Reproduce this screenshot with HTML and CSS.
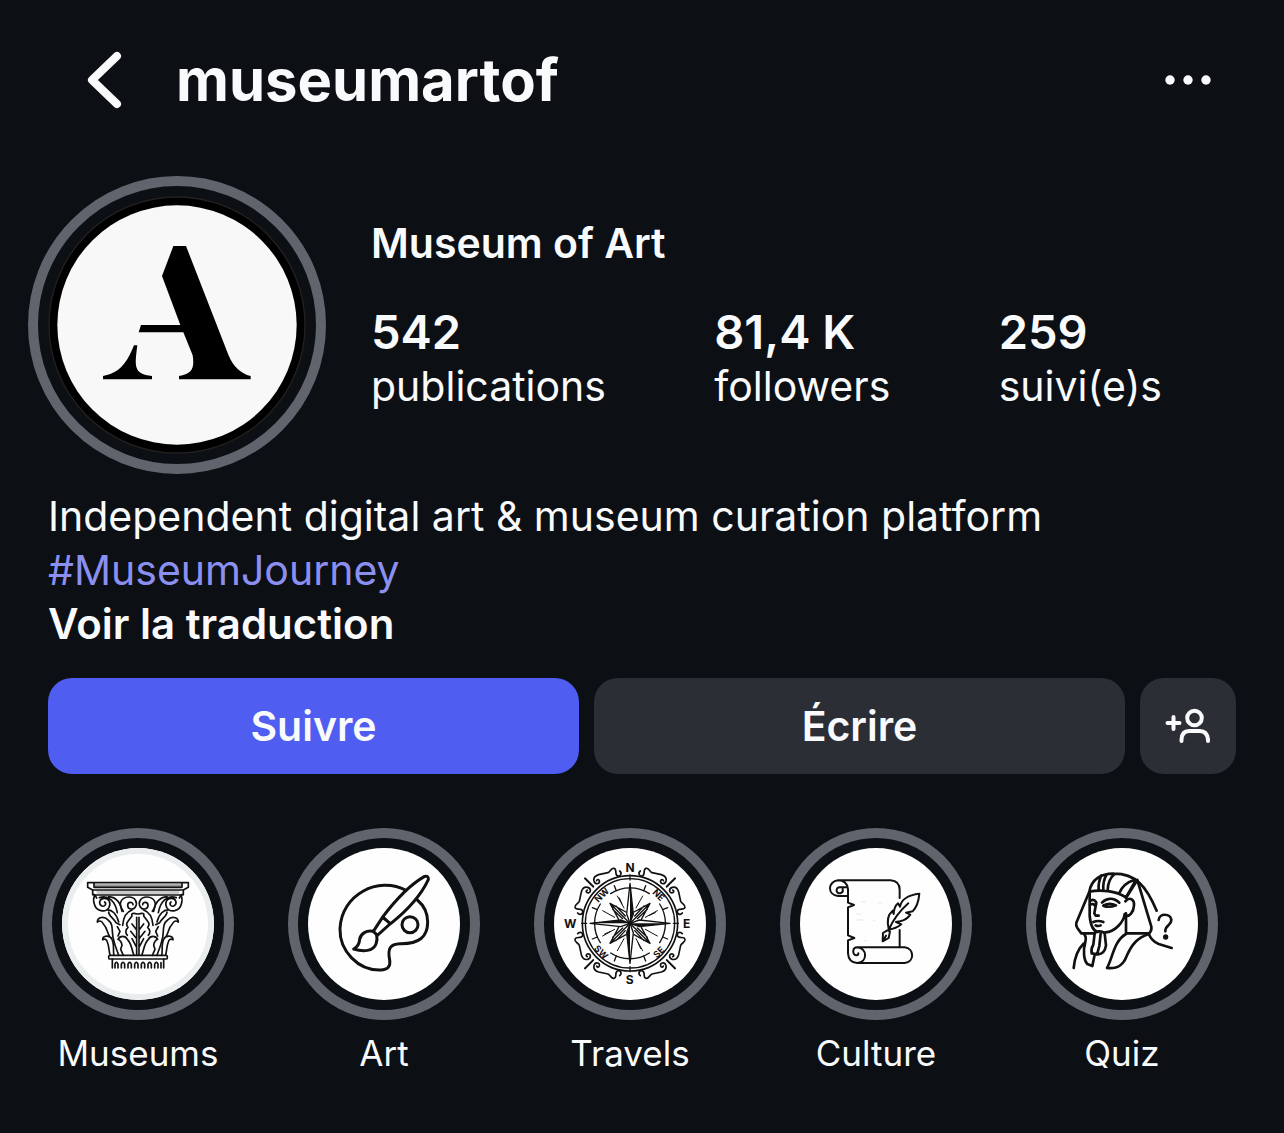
FILE: index.html
```html
<!DOCTYPE html>
<html lang="fr">
<head>
<meta charset="utf-8">
<meta name="viewport" content="width=device-width, initial-scale=1">
<title>museumartof</title>
<link rel="stylesheet" href="styles.css">
</head>
<body>
<header class="topbar">
  <button class="icon-button" type="button" aria-label="Retour">
    <svg class="back-icon" viewBox="0 0 36 58" aria-hidden="true"><path d="M31 5 6 29 31 53"/></svg>
  </button>
  <h1 class="username">museumartof</h1>
  <button class="icon-button" type="button" aria-label="Options">
    <svg class="more-icon" viewBox="0 0 46 10" aria-hidden="true"><circle cx="5" cy="5" r="4.7"/><circle cx="23" cy="5" r="4.7"/><circle cx="41" cy="5" r="4.7"/></svg>
  </button>
</header>

<main>
  <section class="profile">
    <a class="avatar" href="#story" aria-label="Story de museumartof">
      <svg viewBox="84 78 774 774" aria-hidden="true">
        <circle cx="471" cy="465" r="384" fill="#000" stroke="#24211f" stroke-width="4"/>
        <circle cx="471" cy="465" r="359" fill="#f8f8f8"/>
        <path d="M460 228H498L625 554Q646 606 692 618V628H477V618C516 612 524 594 518 556L490 487H356L363 465H481L426 318Z"/>
        <path d="M342 526H352C344 590 340 612 396 618V628H249V618C300 610 322 576 342 526Z"/>
      </svg>
    </a>
    <div class="summary">
      <h2 class="name">Museum of Art</h2>
      <ul class="stats">
        <li><a href="#publications"><strong>542</strong><span>publications</span></a></li>
        <li><a href="#followers"><strong>81,4 K</strong><span>followers</span></a></li>
        <li><a href="#suivis"><strong>259</strong><span>suivi(e)s</span></a></li>
      </ul>
    </div>
  </section>

  <section class="bio">
    <p>Independent digital art &amp; museum curation platform</p>
    <p><a class="hashtag" href="#MuseumJourney">#MuseumJourney</a></p>
    <button class="translate" type="button">Voir la traduction</button>
  </section>

  <div class="actions">
    <button class="action primary" type="button">Suivre</button>
    <button class="action" type="button">Écrire</button>
    <button class="action square" type="button" aria-label="Suggestions">
      <svg viewBox="0 0 46 36" aria-hidden="true"><circle cx="29.500" cy="10" r="7.300"/><path d="M16.500 33V31.500Q17 23 24 23H35Q42 23 43 31.500V33M2.500 15H14.500M8.500 9V21"/></svg>
    </button>
  </div>

  <nav class="highlights" aria-label="Stories à la une">
    <a class="highlight" href="#museums">
      <span class="ring">
        <svg class="art" viewBox="66 72 456 456" aria-hidden="true">
          <circle cx="294" cy="300" r="219" fill="none" stroke="#eaedee" stroke-width="18"/>
          <g stroke-width="5">
            <path d="M162 181H426V192H166Z" fill="#999" stroke="none"/>
            <path d="M168 200H418V211H172Z" fill="#ccc" stroke="none"/>
            <path d="M143 176H445V190L430 198V212H424L418 222M143 176V190L158 198V212H164L170 222M162 176V190H426V176M160 198H428M160 213H428"/>
            <rect x="206" y="394" width="176" height="11" rx="4"/>
            <path d="M217 405V432M371 405V432M225 432V420Q229 410 234 420V432M244 432V420Q249 410 254 420V432M264 432V420Q269 410 274 420V432M284 432V420Q289 410 294 420V432M304 432V420Q309 410 314 420V432M324 432V420Q329 410 334 420V432M344 432V420Q349 410 354 420V432M363 432V416"/>
          </g>
          <g id="acanthus" stroke-width="5">
            <path d="M164 214Q158 226 163 240C168 262 196 268 207 250C214 236 206 222 192 223C178 224 174 240 186 246C194 249 201 240 194 234M178 221C206 212 226 232 232 266M206 218C228 220 242 236 246 262M200 258C216 256 230 270 236 294"/>
            <path d="M250 262C232 240 244 220 265 219C286 218 294 236 286 249C279 260 263 256 263 244C263 233 279 232 279 242M276 258C258 264 250 278 248 304"/>
            <path d="M172 294C172 278 194 276 204 288C224 302 212 326 222 352C226 370 232 380 236 394M172 294Q184 286 190 300C202 312 200 322 208 336M206 264C206 276 220 282 228 296L240 302"/>
            <path d="M188 347C188 334 210 332 216 346C224 362 218 378 222 394M188 347Q200 342 202 354C208 368 206 380 210 392M234 346C240 334 256 334 262 346C276 360 274 376 282 394M234 346Q244 350 246 364L242 376 250 394"/>
            <path d="M290 280V394M292 270Q272 264 276 276L264 292Q256 300 264 310Q252 322 262 334M290 318 276 300M290 344 272 322M290 370 276 344M232 308 240 322 234 336"/>
          </g>
          <use href="#acanthus" transform="matrix(-1 0 0 1 587 0)"/>
        </svg>
      </span>
      <span class="label">Museums</span>
    </a>

    <a class="highlight" href="#art">
      <span class="ring">
        <svg class="art" viewBox="66 72 456 456" stroke-width="9" aria-hidden="true">
          <path d="M360 199C276 155 166 212 162 314C160 380 216 440 284 438C306 437 314 427 311 408C304 374 312 360 342 359C400 360 425 338 425 294C425 266 413 244 394 228"/>
          <circle cx="372" cy="302" r="24"/>
          <path d="M289 280C330 226 368 184 416 157C424 155 428 159 427 167C404 216 368 256 314 299ZM291 279 312 299M289 281 262 322 274 334 312 300"/>
          <path d="M262 322C242 318 224 328 221 346C220 362 212 370 203 375C232 384 262 382 270 360Q275 346 272 334"/>
        </svg>
      </span>
      <span class="label">Art</span>
    </a>

    <a class="highlight" href="#travels">
      <span class="ring">
        <svg class="art compass" viewBox="66 72 456 456" stroke-width="5" aria-hidden="true">
          <circle cx="294" cy="298" r="143"/>
          <circle cx="294" cy="298" r="134" stroke-width="4"/>
          <g id="quarter">
            <path d="M236 209A106 106 0 0 1 352 209" stroke-width="4"/>
            <path d="M294 153V168M253 200 247 185M335 200 341 185" stroke-width="4"/>
            <path d="M276 252 256 216M312 252 332 216M270 240 262 222" stroke-width="3"/>
            <path d="M294 178 304 270 294 298 284 270Z" stroke-width="4"/>
            <path d="M294 178 304 270 294 298Z" fill="#111" stroke="none"/>
            <path d="M306 264 354 238 328 286M350 242 296 296M336 246 308 276M346 256 316 284" stroke-width="4"/>
            <g id="scroll" stroke-width="5">
              <path d="M325 141C317 147 322 158 331 156C342 151 331 136 342 133C350 131 352 142 360 146L388 152C398 155 404 162 402 171C399 183 383 181 386 170C388 165 393 166 394 170"/>
              <path d="M404 188 429 163"/>
            </g>
            <use href="#scroll" transform="matrix(-1 0 0 1 588 0)"/>
          </g>
          <use href="#quarter" transform="rotate(90 294 298)"/>
          <use href="#quarter" transform="rotate(180 294 298)"/>
          <use href="#quarter" transform="rotate(270 294 298)"/>
          <g class="cardinals">
            <text x="294" y="144">N</text><text x="464" y="311">E</text><text x="293" y="480">S</text><text x="115" y="311">W</text>
          </g>
          <g class="ordinals">
            <text transform="translate(380 213) rotate(45)" y="10">NE</text>
            <text transform="translate(209 213) rotate(-45)" y="10">NW</text>
            <text transform="translate(208 384) rotate(45)" y="10">SW</text>
            <text transform="translate(380 384) rotate(-45)" y="10">SE</text>
          </g>
        </svg>
      </span>
      <span class="label">Travels</span>
    </a>

    <a class="highlight" href="#culture">
      <span class="ring">
        <svg class="art" viewBox="66 72 456 456" stroke-width="6" aria-hidden="true">
          <path d="M180 169H338Q365 171 365 198V222M365 318V370M180 169C150 172 146 212 180 216H210M180 169Q208 170 210 196V236L228 243 210 250V334L229 342 210 349V388Q212 416 238 417M189 207C174 212 170 190 186 190H209M189 207Q196 205 194 194"/>
          <path d="M238 370H380C410 374 410 414 380 417H238C270 414 268 372 238 370C222 370 222 394 236 394Q241 394 241 388"/>
          <path d="M332 314C326 290 332 270 344 260L347 270Q348 248 360 238L366 248C370 224 396 212 424 209C422 232 416 250 404 262L384 266 397 272Q386 288 366 292L354 294 370 301Q354 314 332 317ZM332 318Q352 272 391 238"/>
          <path d="M328 319 315 327 314 352 332 342 336 322ZM315 351 324 335"/>
          <g stroke="#ddd" stroke-width="2"><path d="M250 234H262M300 236H312M236 270H248M238 288H256M286 290H290M258 350H266"/></g>
        </svg>
      </span>
      <span class="label">Culture</span>
    </a>

    <a class="highlight" href="#quiz">
      <span class="ring">
        <svg class="art" viewBox="66 72 456 456" stroke-width="8" aria-hidden="true">
          <path d="M196 203C202 166 232 148 270 149C334 149 366 184 398 260M196 203 157 296Q155 306 160 312L172 328H212M196 203C230 196 276 200 306 220L335 169M232 154Q222 176 224 197M248 151Q236 172 238 197M272 150Q252 166 251 198M330 168Q298 178 286 207"/>
          <path d="M340 168 382 308Q384 318 376 328H306V268M340 168 306 222M197 205V276C200 306 208 322 222 324M244 325C274 324 300 292 302 270"/>
          <path d="M304 232C318 216 332 228 330 244C329 264 316 280 304 274M200 230Q210 224 216 234M217 236 211 268 215 275H224M234 236C250 220 270 222 286 236M198 243Q208 236 214 246M238 245Q256 234 276 244Q254 252 238 245M208 294Q222 288 238 294M215 304Q222 308 230 304"/>
          <path d="M212 328C216 320 236 320 242 328L246 364Q242 390 222 391L203 388Q200 376 208 362L212 328M230 328 226 366 220 388M180 330Q188 338 184 354C176 380 180 410 190 420L205 426 212 392M180 358Q154 382 149 432"/>
          <path d="M306 330C270 350 266 402 249 432C286 436 300 418 308 396C324 360 340 342 374 330Q384 352 404 360L443 372"/>
          <path d="M404 288C406 266 440 268 442 288C442 306 424 302 424 322"/>
          <circle cx="425" cy="339" r="4" fill="#111"/>
        </svg>
      </span>
      <span class="label">Quiz</span>
    </a>
  </nav>
</main>
</body>
</html>
```
FILE: styles.css
```css
* {
  box-sizing: border-box;
}

body {
  margin: 0;
  min-height: 100vh;
  background: #0c0f14;
  color: #f9fafc;
  font-family: Inter, "Liberation Sans", sans-serif;
  font-size: 41px;
  line-height: 54px;
}

h1, h2, p, ul {
  margin: 0;
  padding: 0;
}

ul {
  list-style: none;
}

a {
  color: inherit;
  text-decoration: none;
}

button {
  margin: 0;
  padding: 0;
  border: 0;
  background: none;
  color: inherit;
  font: inherit;
  cursor: pointer;
}

svg {
  display: block;
}

.topbar {
  display: flex;
  align-items: center;
  height: 160px;
  padding: 0 73px 0 86px;
}

.icon-button {
  flex: none;
}

.back-icon {
  width: 36px;
  height: 58px;
  fill: none;
  stroke: currentColor;
  stroke-width: 8;
  stroke-linecap: round;
  stroke-linejoin: round;
}

.more-icon {
  width: 46px;
  height: 10px;
  fill: currentColor;
}

.username {
  flex: 1;
  margin-left: 54px;
  font-size: 58px;
  font-weight: 700;
  line-height: 72px;
}

.profile {
  display: flex;
  gap: 45px;
  padding: 16px 122px 0 28px;
}

.avatar,
.ring {
  flex: none;
  border: 10px solid #60646d;
  border-radius: 50%;
  padding: 10px;
}

.avatar {
  width: 298px;
  height: 298px;
}

.summary {
  flex: 1;
  padding-top: 40px;
}

.name {
  font-size: 41px;
  font-weight: 600;
}

.stats {
  display: flex;
  justify-content: space-between;
  margin-top: 35px;
}

.stats strong,
.stats span {
  display: block;
}

.stats strong {
  font-size: 47px;
  font-weight: 600;
}

.bio {
  padding: 15px 48px 0;
}

.hashtag {
  color: #8b8ff0;
}

.translate {
  display: block;
  font-size: 42px;
  font-weight: 600;
}

.actions {
  display: flex;
  gap: 15px;
  padding: 27px 48px 0;
}

.action {
  display: grid;
  place-items: center;
  flex: 1;
  height: 96px;
  border-radius: 24px;
  background: #2b2e35;
  font-weight: 600;
}

.primary {
  background: #4f5df0;
}

.square {
  flex: none;
  width: 96px;
}

.square svg {
  width: 46px;
  height: 36px;
  fill: none;
  stroke: currentColor;
  stroke-width: 4;
  stroke-linecap: round;
}

.highlights {
  display: grid;
  grid-template-columns: repeat(5, 1fr);
  padding: 54px 39px 0 15px;
}

.highlight {
  display: flex;
  flex-direction: column;
  align-items: center;
  gap: 11px;
}

.ring {
  width: 192px;
  height: 192px;
}

.art {
  border-radius: 50%;
  background: #fefefe;
  fill: none;
  stroke: #111;
  stroke-linecap: round;
  stroke-linejoin: round;
}

.compass text {
  fill: #111;
  stroke: none;
  font-weight: 700;
  text-anchor: middle;
}

.cardinals {
  font-size: 36px;
}

.ordinals {
  font-size: 27px;
}

.label {
  font-size: 35px;
  line-height: 44px;
}
```
